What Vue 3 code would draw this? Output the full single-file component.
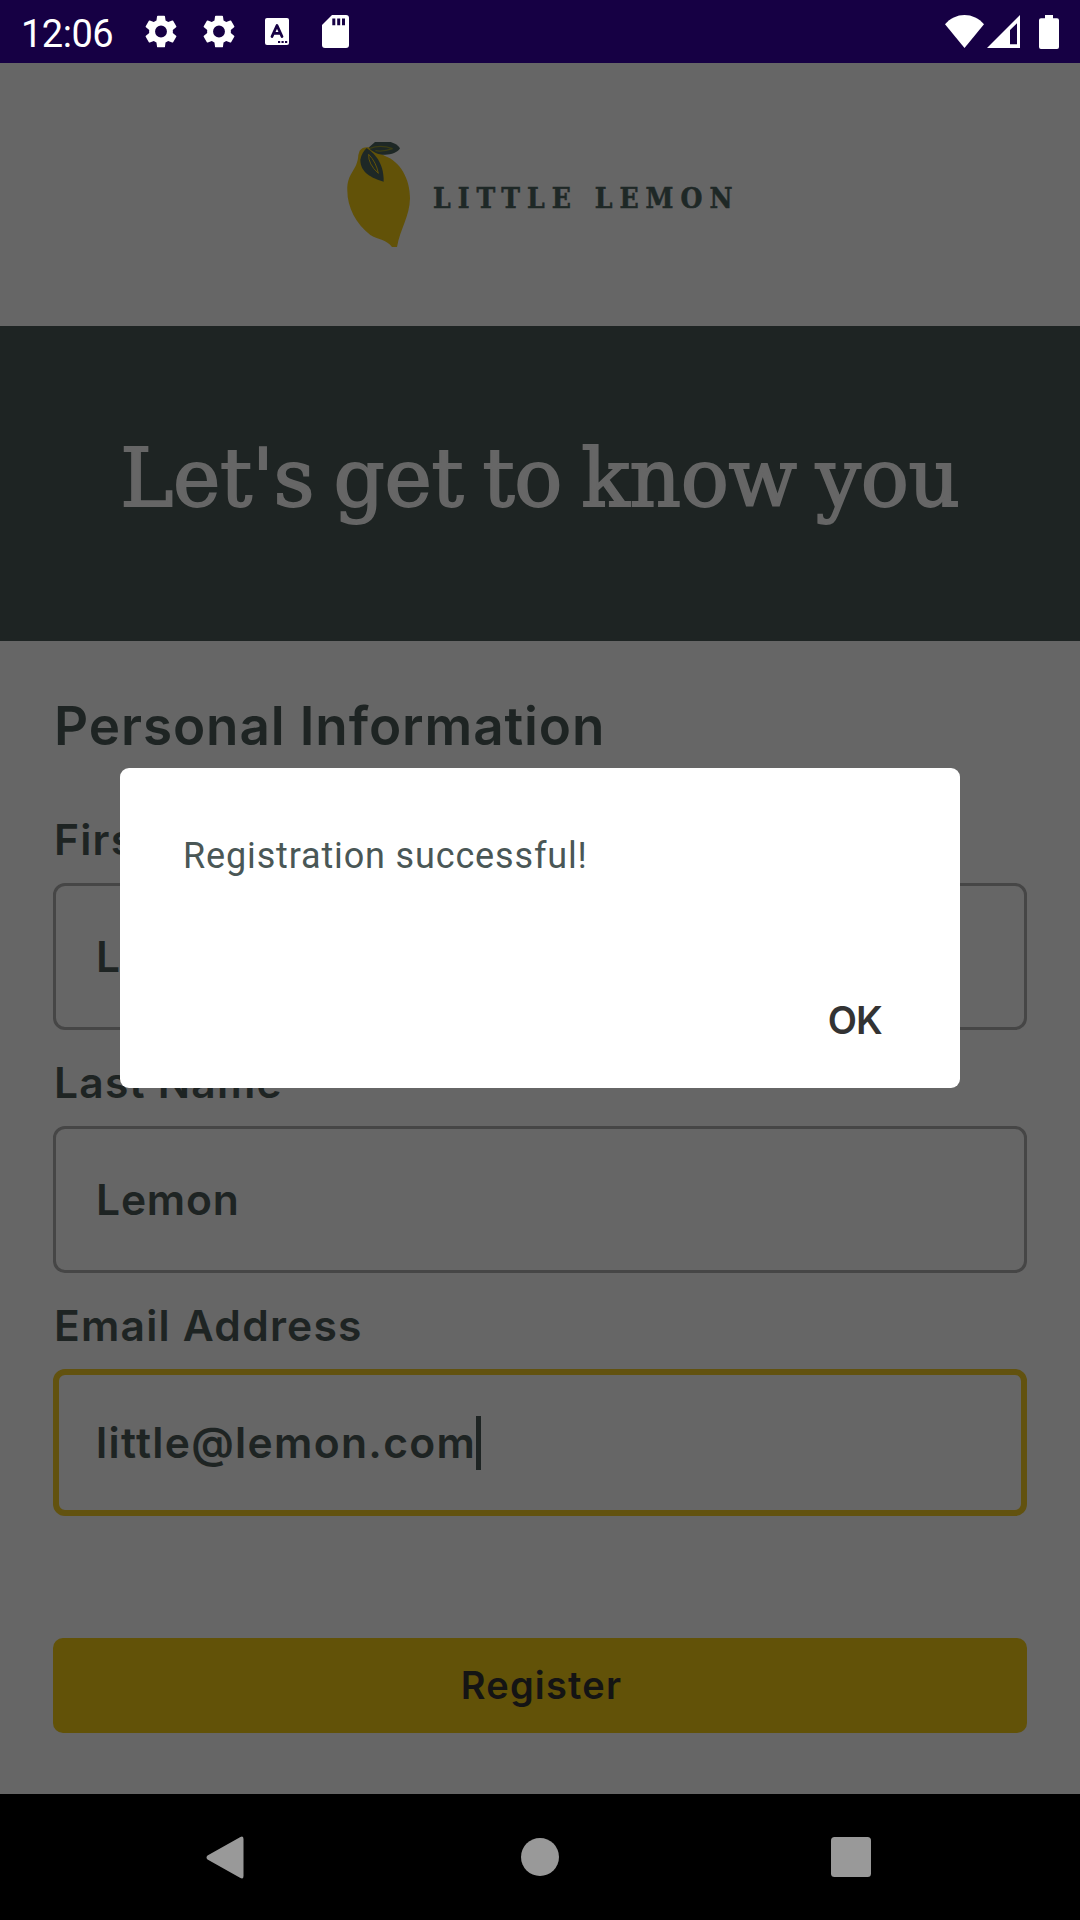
<script setup>
import { ref } from 'vue'

const fields = ref([
  { label: 'First Name', value: 'Little', cls: 'first' },
  { label: 'Last Name', value: 'Lemon', cls: 'last' },
  { label: 'Email Address', value: 'little@lemon.com', cls: 'email', focused: true },
])
const gear =
  'M19.14 12.94c.04-.3.06-.61.06-.94 0-.32-.02-.64-.07-.94l2.03-1.58a.49.49 0 0 0 .12-.61l-1.92-3.32a.49.49 0 0 0-.59-.22l-2.39.96a7 7 0 0 0-1.62-.94l-.36-2.54a.48.48 0 0 0-.48-.41h-3.84a.47.47 0 0 0-.47.41l-.36 2.54c-.59.24-1.13.57-1.62.94l-2.39-.96a.48.48 0 0 0-.59.22L2.74 8.87a.47.47 0 0 0 .12.61l2.03 1.58c-.05.3-.09.63-.09.94s.02.64.07.94l-2.03 1.58a.49.49 0 0 0-.12.61l1.92 3.32c.12.22.37.29.59.22l2.39-.96c.5.38 1.03.7 1.62.94l.36 2.54c.05.24.24.41.48.41h3.84c.24 0 .44-.17.47-.41l.36-2.54a7 7 0 0 0 1.62-.94l2.39.96c.22.08.47 0 .59-.22l1.92-3.32a.47.47 0 0 0-.12-.61zM12 15.6a3.6 3.6 0 1 1 0-7.2 3.6 3.6 0 0 1 0 7.2z'
</script>

<template>
  <div class="screen">
    <header class="status">
      <span class="time">12:06</span>
      <svg class="gear" viewBox="2.4 2 19.2 20"><path :d="gear" /></svg>
      <svg class="gear gear2" viewBox="2.4 2 19.2 20"><path :d="gear" /></svg>
      <svg class="lang" width="24" height="27" viewBox="0 0 24 27">
        <rect width="24" height="27" rx="2" />
        <path d="M7 18.500 12 7.500 17 18.500M9 15.300H15" fill="none" stroke="#160044" stroke-width="2.800" stroke-linecap="round" stroke-linejoin="round" />
        <path d="M13 23h2.200v2H13zM16.500 23h2.200v2h-2.200zM20 23h2.200v2H20z" fill="#160044" />
      </svg>
      <svg class="sd" width="27" height="33" viewBox="0 0 27 33">
        <path d="M10 0h14a3 3 0 0 1 3 3v27a3 3 0 0 1-3 3H3a3 3 0 0 1-3-3V10z" />
        <path d="M10.300 3.500h3v6.800h-3zM15.200 3.500h3v6.800h-3zM20 3.500h3v6.800h-3z" fill="#160044" />
      </svg>
      <span class="spacer"></span>
      <svg width="39" height="33" viewBox="0 0 39 33"><path d="M0 9.200C5 3.400 12 0 19.500 0S34 3.400 39 9.200L19.500 33z" /></svg>
      <svg class="signal" width="33" height="33" viewBox="0 0 33 33"><path fill-rule="evenodd" d="M33 0v33H0zM30 8.200 23 15v14.300h7z" /></svg>
      <svg class="battery" width="20" height="34" viewBox="0 0 20 34"><path d="M6 0h8v3.300h4a2 2 0 0 1 2 2V32a2 2 0 0 1-2 2H2a2 2 0 0 1-2-2V5.300a2 2 0 0 1 2-2h4z" /></svg>
    </header>

    <div class="brand">
      <svg class="lemon" width="64" height="106" viewBox="81 66 192 318">
        <path fill="#625208" d="M119 92Q128 80 147 82L195 108C240 125 270 175 270 235C269 290 241 325 231 381L216 381C200 358 177 361 151 345C108 311 82 262 82 212C81 155 112 155 115 105Z" />
        <path fill="#1e2826" d="M147 82L165 66H212Q232 72 240 85C230 104 190 110 166 98L152 90Z" />
        <path fill="none" stroke="#3c3d14" stroke-width="4" d="M150 85Q180 73 218 86M166 92Q190 96 218 86" />
        <path fill="#1e2826" d="M140 84C160 98 192 125 191 185C155 174 121 158 121 119Q125 98 140 84Z" />
        <path fill="none" stroke="#625208" stroke-width="3" d="M146 103Q144 132 175 160Q169 127 146 103" />
      </svg>
      <span class="brand-name">LITTLE LEMON</span>
    </div>

    <div class="hero"><h1>Let's get to know you</h1></div>

    <main class="form">
      <h2><span>Personal Information</span></h2>
      <div v-for="f in fields" :key="f.label" class="field" :class="f.cls">
        <label><span>{{ f.label }}</span></label>
        <div class="input" :class="{ focused: f.focused }">
          <span class="value">{{ f.value }}</span><i v-if="f.focused" class="caret"></i>
        </div>
      </div>
      <button><span>Register</span></button>
    </main>

    <nav class="nav">
      <svg width="38" height="43" viewBox="0 0 38 43"><path d="M34 1.200Q37.500-1 37.500 3V40Q37.500 44 34 41.800L1.500 23.500Q-.5 21.500 1.500 19.500Z" /></svg>
      <svg class="home" width="40" height="40" viewBox="0 0 40 40"><circle cx="20" cy="20" r="19" /></svg>
      <svg width="40" height="40" viewBox="0 0 40 40"><rect width="40" height="40" rx="3.500" /></svg>
    </nav>

    <section class="dialog">
      <p>Registration successful!</p>
      <div class="actions"><span>OK</span></div>
    </section>
  </div>
</template>

<style>
body { margin: 0; background: #666; }
</style>

<style scoped>
* { box-sizing: border-box; }
svg { display: block; flex: none; }
h1, h2, p { margin: 0; font-weight: 400; }
.screen {
  position: relative;
  display: flex;
  flex-direction: column;
  width: 1080px;
  height: 1920px;
  overflow: hidden;
  background: #666;
  color: #1e2423;
  font-family: Inter, sans-serif;
  white-space: nowrap;
}
.status {
  display: flex;
  align-items: center;
  height: 63px;
  padding: 0 21px;
  background: #160044;
  fill: #fff;
}
.time {
  width: 124px;
  padding-top: 4px;
  font: 400 38px/60px Roboto, sans-serif;
  letter-spacing: -.5px;
  color: #fff;
}
.gear { width: 32px; height: 33px; }
.gear2 { margin-left: 26px; }
.lang { margin-left: 30px; }
.sd { margin-left: 32.500px; }
.spacer { flex: 1; }
.signal { margin-left: 3px; }
.battery { margin-left: 19px; }
.brand {
  display: flex;
  align-items: flex-start;
  height: 263px;
  padding: 79px 0 0 347px;
}
.brand-name {
  margin: 40px 0 0 22px;
  font: 700 28px/34px "DejaVu Serif Condensed", "DejaVu Serif", serif;
  font-stretch: condensed;
  letter-spacing: 7px;
  word-spacing: 1px;
  color: #1e2826;
  -webkit-text-stroke: .5px #1e2826;
}
.hero {
  display: flex;
  justify-content: center;
  height: 315px;
  padding-top: 98px;
  background: #1e2423;
}
h1 {
  font: 400 80px/110px "DejaVu Serif", serif;
  letter-spacing: -.3px;
  word-spacing: -6px;
  color: #666;
  -webkit-text-stroke: 1.800px #666;
}
.form { display: flex; flex-direction: column; height: 1153px; padding: 55px 53px 0; }
h2 { height: 119px; padding-left: 1px; font-size: 53px; line-height: 60px; font-weight: 600; letter-spacing: .9px; }
.field { margin-bottom: 28px; }
label { display: block; height: 68px; padding-left: 1px; font-size: 42.600px; line-height: 49px; font-weight: 600; letter-spacing: 1.200px; }
.input {
  display: flex;
  align-items: center;
  height: 147px;
  padding-left: 40px;
  border: 3px solid #464646;
  border-radius: 12px;
  font-size: 42.600px;
  line-height: 54px;
  font-weight: 600;
  letter-spacing: .8px;
}
.input.focused { padding-left: 37px; border: 6px solid #62520f; letter-spacing: 1.300px; }
.caret { width: 5px; height: 54px; background: #1e2423; }
button {
  height: 95px;
  margin-top: 94px;
  border: 0;
  border-radius: 10px;
  background: #625208;
  color: #141414;
  font: 600 38px/95px Inter, sans-serif;
  letter-spacing: 1.200px;
  padding: 0 0 0 3px;
}
.nav {
  display: flex;
  align-items: center;
  justify-content: space-between;
  height: 126px;
  padding: 0 209px 0 206px;
  background: #000;
  fill: #999;
}
.home { margin-left: 4px; }
.dialog {
  position: absolute;
  left: 120px;
  top: 768px;
  width: 840px;
  height: 320px;
  padding: 64px 78px 0 63px;
  border-radius: 9px;
  background: #fff;
}
.dialog p { height: 162px; font: 400 36px/48px Roboto, sans-serif; letter-spacing: .850px; color: #4a5756; }
.actions { display: flex; justify-content: flex-end; font-size: 38px; line-height: 52px; font-weight: 600; letter-spacing: -.8px; color: #333; }
</style>
